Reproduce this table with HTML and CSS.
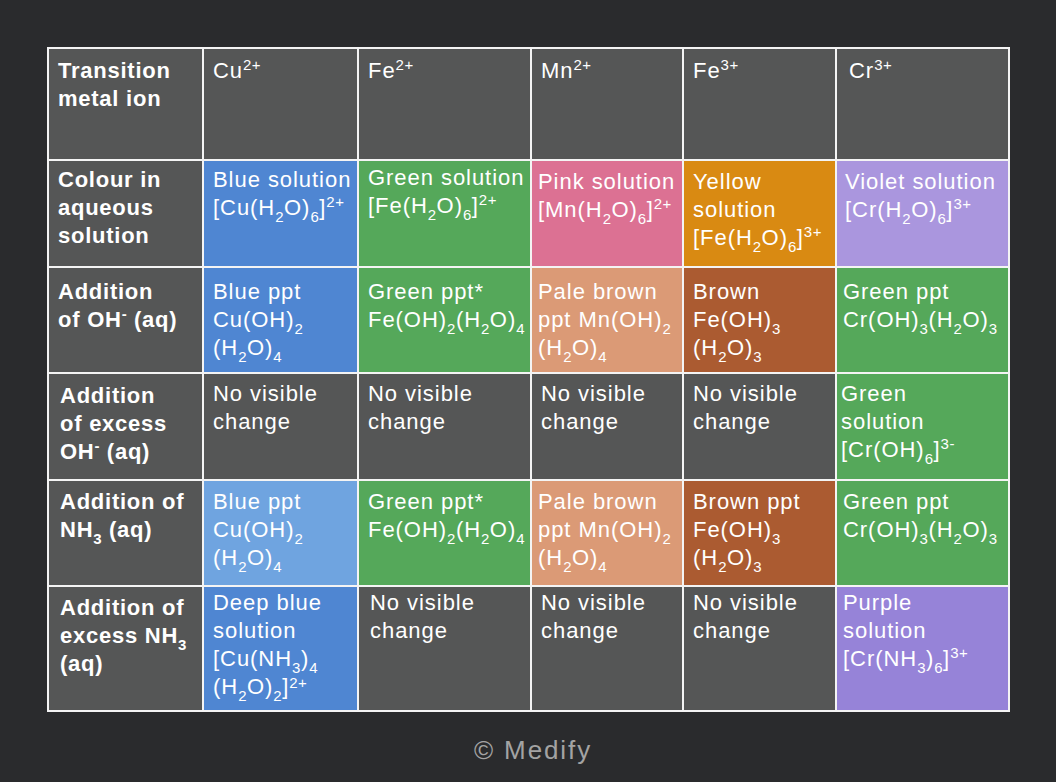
FILE: index.html
```html
<!DOCTYPE html>
<html>
<head>
<meta charset="utf-8">
<link rel="stylesheet" href="styles.css">
</head>
<body>
<div class="page">
<table class="chart">
<colgroup>
<col class="c0"><col class="c1"><col class="c2"><col class="c3"><col class="c4"><col class="c5">
</colgroup>
<tr class="r1">
<th>Transition<br>metal ion</th>
<td class="grey">Cu<sup>2+</sup></td>
<td class="grey">Fe<sup>2+</sup></td>
<td class="grey">Mn<sup>2+</sup></td>
<td class="grey">Fe<sup>3+</sup></td>
<td class="grey x5">Cr<sup>3+</sup></td>
</tr>
<tr class="r2">
<th>Colour in<br>aqueous<br>solution</th>
<td class="blue">Blue solution<br>[Cu(H<sub>2</sub>O)<sub>6</sub>]<sup>2+</sup></td>
<td class="green up">Green solution<br>[Fe(H<sub>2</sub>O)<sub>6</sub>]<sup>2+</sup></td>
<td class="pink down x3">Pink solution<br>[Mn(H<sub>2</sub>O)<sub>6</sub>]<sup>2+</sup></td>
<td class="orange down">Yellow<br>solution<br>[Fe(H<sub>2</sub>O)<sub>6</sub>]<sup>3+</sup></td>
<td class="violet down x5b">Violet solution<br>[Cr(H<sub>2</sub>O)<sub>6</sub>]<sup>3+</sup></td>
</tr>
<tr class="r3">
<th>Addition<br>of OH<sup>-</sup> (aq)</th>
<td class="blue">Blue ppt<br>Cu(OH)<sub>2</sub><br>(H<sub>2</sub>O)<sub>4</sub></td>
<td class="green">Green ppt*<br>Fe(OH)<sub>2</sub>(H<sub>2</sub>O)<sub>4</sub></td>
<td class="pale x3">Pale brown<br>ppt Mn(OH)<sub>2</sub><br>(H<sub>2</sub>O)<sub>4</sub></td>
<td class="brown">Brown<br>Fe(OH)<sub>3</sub><br>(H<sub>2</sub>O)<sub>3</sub></td>
<td class="green x5c">Green ppt<br>Cr(OH)<sub>3</sub>(H<sub>2</sub>O)<sub>3</sub></td>
</tr>
<tr class="r4">
<th class="hx">Addition<br>of excess<br>OH<sup>-</sup> (aq)</th>
<td class="grey">No visible<br>change</td>
<td class="grey">No visible<br>change</td>
<td class="grey">No visible<br>change</td>
<td class="grey">No visible<br>change</td>
<td class="green x5d">Green<br>solution<br>[Cr(OH)<sub>6</sub>]<sup>3-</sup></td>
</tr>
<tr class="r5">
<th class="hx">Addition of<br>NH<sub>3</sub> (aq)</th>
<td class="lightblue">Blue ppt<br>Cu(OH)<sub>2</sub><br>(H<sub>2</sub>O)<sub>4</sub></td>
<td class="green">Green ppt*<br>Fe(OH)<sub>2</sub>(H<sub>2</sub>O)<sub>4</sub></td>
<td class="pale x3">Pale brown<br>ppt Mn(OH)<sub>2</sub><br>(H<sub>2</sub>O)<sub>4</sub></td>
<td class="brown">Brown ppt<br>Fe(OH)<sub>3</sub><br>(H<sub>2</sub>O)<sub>3</sub></td>
<td class="green x5c">Green ppt<br>Cr(OH)<sub>3</sub>(H<sub>2</sub>O)<sub>3</sub></td>
</tr>
<tr class="r6">
<th class="hx">Addition of<br>excess NH<sub>3</sub><br>(aq)</th>
<td class="blue">Deep blue<br>solution<br>[Cu(NH<sub>3</sub>)<sub>4</sub><br>(H<sub>2</sub>O)<sub>2</sub>]<sup class="lo">2+</sup></td>
<td class="grey x2">No visible<br>change</td>
<td class="grey">No visible<br>change</td>
<td class="grey">No visible<br>change</td>
<td class="purple x5c">Purple<br>solution<br>[Cr(NH<sub>3</sub>)<sub>6</sub>]<sup>3+</sup></td>
</tr>
</table>
<div class="credit">© Medify</div>
</div>
</body>
</html>
```
FILE: styles.css
```css
html, body {
  margin: 0;
  padding: 0;
  background: #2a2b2d;
}
.page {
  width: 1056px;
  height: 782px;
  padding-top: 47px;
  box-sizing: border-box;
  font-family: "Liberation Sans", Arial, sans-serif;
  color: #ffffff;
}
.chart {
  margin-left: 47px;
  border-collapse: collapse;
  table-layout: fixed;
  width: 961px;
  border: 2px solid #f4f4f4;
}
.c0 { width: 155px; }
.c1 { width: 155px; }
.c2 { width: 173px; }
.c3 { width: 152px; }
.c4 { width: 153px; }
.c5 { width: 173px; }
.chart th, .chart td {
  border: 2px solid #f4f4f4;
  vertical-align: top;
  text-align: left;
  padding: 6px 0 0 9px;
  font-size: 22px;
  line-height: 28px;
  letter-spacing: 0.95px;
  background: #555656;
  white-space: nowrap;
  overflow: hidden;
}
.chart th {
  font-weight: bold;
  padding-left: 9px;
  letter-spacing: 0.75px;
}
.chart th.hx { padding-left: 11px; }
.r1 > * { padding-top: 8px !important; }
.r2 > * { padding-top: 5px !important; }
.r2 > td.up { padding-top: 3px !important; }
.r2 > td.down { padding-top: 7px !important; }
.r3 > * { padding-top: 10px !important; }
.r4 > * { padding-top: 6px !important; }
.r4 > th { padding-top: 8px !important; }
.r5 > * { padding-top: 7px !important; }
.r6 > * { padding-top: 2px !important; }
.r6 > th { padding-top: 7px !important; }
.r1 { height: 112px; }
.r2 { height: 107px; }
.r3 { height: 106px; }
.r4 { height: 107px; }
.r5 { height: 106px; }
.r6 { height: 125px; }
.chart td.x2 { padding-left: 11px; }
.chart td.x3 { padding-left: 6px; }
.chart td.x5 { padding-left: 12px; }
.chart td.x5b { padding-left: 8px; }
.chart td.x5c { padding-left: 6px; }
.chart td.x5d { padding-left: 4px; }
sub, sup {
  font-size: 15px;
  line-height: 0;
  position: relative;
  vertical-align: baseline;
  letter-spacing: 0.5px;
}
sub { top: 7px; }
sup { top: -8px; }
sup.lo { top: -6px; }
.grey { background: #555656 !important; }
.blue { background: #4f86d2 !important; }
.lightblue { background: #6fa4e0 !important; }
.green { background: #55a85a !important; }
.pink { background: #dc7193 !important; }
.orange { background: #d98a12 !important; }
.violet { background: #aa96de !important; }
.pale { background: #db9a76 !important; }
.brown { background: #ab5b31 !important; }
.purple { background: #9683d8 !important; }
.credit {
  margin-top: 23px;
  padding-left: 10px;
  text-align: center;
  font-size: 26px;
  color: #a3a3a3;
  letter-spacing: 1.9px;
}
```
